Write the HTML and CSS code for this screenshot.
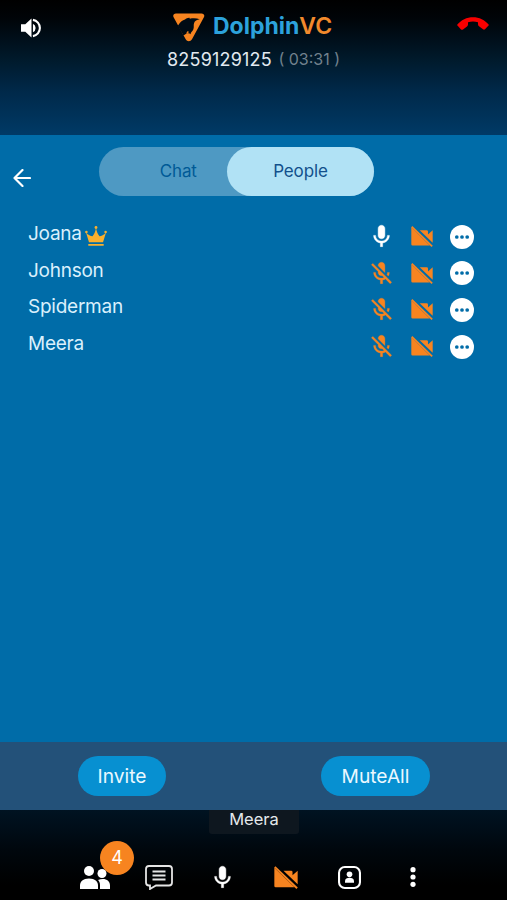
FILE: index.html
```
<!DOCTYPE html>
<html lang="en">
<head>
<meta charset="utf-8">
<title>DolphinVC</title>
<link rel="stylesheet" href="styles.css">
</head>
<body>
<svg width="0" height="0" class="defs" aria-hidden="true">
  <symbol id="mic" viewBox="0 0 24 24"><path d="M12 14c1.660 0 3-1.340 3-3V5c0-1.660-1.340-3-3-3S9 3.340 9 5v6c0 1.660 1.340 3 3 3zm5.300-3c0 3-2.540 5.100-5.300 5.100S6.700 14 6.700 11H5c0 3.410 2.720 6.230 6 6.720V21h2v-3.280c3.280-.480 6-3.300 6-6.720h-1.700z" stroke="currentColor" stroke-width=".4"/></symbol>
  <symbol id="mic-off" viewBox="0 0 24 24"><path d="M19 11h-1.700c0 .740-.160 1.430-.430 2.050l1.230 1.230c.560-.980.900-2.090.900-3.280zm-4.020.170c0-.060.020-.110.020-.170V5c0-1.660-1.340-3-3-3S9 3.340 9 5v.180l5.980 5.990zM4.270 3 3 4.270l6.010 6.010V11c0 1.660 1.330 3 2.990 3 .220 0 .440-.030.650-.080l1.660 1.660c-.710.330-1.500.520-2.310.520-2.760 0-5.300-2.100-5.300-5.100H5c0 3.410 2.720 6.230 6 6.720V21h2v-3.280c.910-.130 1.770-.450 2.540-.900L19.730 21 21 19.730 4.270 3z" stroke="currentColor" stroke-width=".3"/></symbol>
  <symbol id="cam-off" viewBox="0 0 21 20"><path d="M.3 1.500 18 18.600H1.500Q.3 18.600.3 17.400zM8.300 4H15q1.200 0 1.200 1.200V8l4.500-4v12z"/><path d="M.7.700 20.200 19.400" stroke="currentColor" stroke-width="1.700" fill="none"/></symbol>
  <symbol id="more" viewBox="0 0 24 24"><circle cx="12" cy="12" r="12"/><g fill="#006ca8"><circle cx="6.800" cy="12" r="1.850"/><circle cx="12" cy="12" r="1.850"/><circle cx="17.200" cy="12" r="1.850"/></g></symbol>
</svg>
<div class="app">
  <header class="top">
    <svg class="speaker" viewBox="0 0 22 20"><path d="M0 6h4.500L11 0v20l-6.500-6H0z"/><path d="M12.500 5.500a5 5 0 0 1 0 9z"/><path d="M12.500 1.500a8.600 8.600 0 0 1 0 17" fill="none" stroke="currentColor" stroke-width="2.200"/></svg>
    <div class="title">
      <div class="brand">
        <svg class="logo" viewBox="0 0 32 29"><path d="M3 .5h25.500c2.300 0 3.500 1.800 2.400 3.800L19 26.300c-1.500 2.500-5 2.500-6.300 0L.6 4.300C-.4 2.300.7.500 3 .5z"/><path class="fin" d="M5 12.500C7.500 8.500 9.500 7.300 12 6.500c1.300-1.200 3-2 4.500-1.800l.3 1c3.500-.7 7-.6 10 .6-3 .3-5 1.500-5.700 3.700-.8 2 .2 4.200-.8 6.500-.8 2-2.500 2.300-2.800 4.700-1-1.200-2.300-1.300-4-.6L10.500 22.500 4.500 12.500c3-1 6-1 8.500.2 2 1 2.800 3 1.800 5-.6 1.100-1.500 1.900-1.600 3.200l3-2z"/></svg>
        <span class="name">Dolphin<b>VC</b></span>
      </div>
      <div class="call"><span class="number">8259129125</span><span class="time">( 03:31 )</span></div>
    </div>
    <svg class="hangup" viewBox="0 0 32 13"><path d="M0 8C8-2.500 24-2.500 32 8l-4 4.300q-1 .7-2 0l-4-3q-1-.7-1-2V5.200q-5-1.500-10 0v2.200q0 1.200-1 2l-4 3q-1 .7-2 0z"/></svg>
  </header>
  <main class="panel">
    <div class="switch">
      <svg class="back" viewBox="0 0 18 18"><path d="M17 9H1.500M9.500 1l-8 8 8 8"/></svg>
      <div class="tabs"><span class="tab">Chat</span><span class="tab active">People</span></div>
    </div>
    <ul class="people">
      <li><span class="person">Joana</span><svg class="crown" viewBox="0 0 22 20"><path d="M4 16.300 1 6.500q3.500 3.800 6.500 3.800Q10.500 7 11 1q.5 6 3.500 9.300 3 0 6.500-3.800l-3 9.800zM3.300 18h15.400v1.700H3.300z"/><circle cx="11" cy="1.500" r="1.400"/><circle cx="1.400" cy="6" r="1.300"/><circle cx="20.600" cy="6" r="1.300"/></svg><span class="status"><svg class="mic on"><use href="#mic"/></svg><svg class="cam"><use href="#cam-off"/></svg><svg class="more"><use href="#more"/></svg></span></li>
      <li><span class="person">Johnson</span><span class="status"><svg class="mic"><use href="#mic-off"/></svg><svg class="cam"><use href="#cam-off"/></svg><svg class="more"><use href="#more"/></svg></span></li>
      <li><span class="person">Spiderman</span><span class="status"><svg class="mic"><use href="#mic-off"/></svg><svg class="cam"><use href="#cam-off"/></svg><svg class="more"><use href="#more"/></svg></span></li>
      <li><span class="person">Meera</span><span class="status"><svg class="mic"><use href="#mic-off"/></svg><svg class="cam"><use href="#cam-off"/></svg><svg class="more"><use href="#more"/></svg></span></li>
    </ul>
  </main>
  <div class="actions"><button class="invite">Invite</button><button class="mute">MuteAll</button></div>
  <footer class="bottom">
    <div class="speaking">Meera</div>
    <nav class="tools">
      <div class="tool"><svg class="group" viewBox="0 0 30 23"><circle cx="9" cy="5" r="5"/><circle cx="22" cy="7.500" r="4.500"/><path d="M0 23v-3.500c0-4 3-7 9-7s9 3 9 7V23zM20 23v-4c0-2-.7-3.700-2-5 7-2.500 12 .5 12 5.500V23z"/></svg><span class="badge">4</span></div>
      <div class="tool"><svg class="chat" viewBox="0 0 28 25"><path d="M4 1h20q3 0 3 3v13.500q0 3-3 3H11L5 24v-3.500H4q-3 0-3-3V4q0-3 3-3z"/><path d="M7.500 6.500h13M7.500 10.500h13M7.500 14.500h13"/></svg></div>
      <div class="tool"><svg class="mic on"><use href="#mic"/></svg></div>
      <div class="tool"><svg class="cam"><use href="#cam-off"/></svg></div>
      <div class="tool"><svg class="profile" viewBox="0 0 22 22"><rect x="1" y="1" width="20" height="20" rx="5.500" fill="none" stroke="currentColor" stroke-width="2"/><circle cx="11" cy="8" r="2.700"/><path d="M6.700 16v-1.500c0-2.300 2-3.200 4.300-3.200s4.300.9 4.300 3.200V16z"/></svg></div>
      <div class="tool"><svg class="dots" viewBox="0 0 6 20"><circle cx="3" cy="2.700" r="2.600"/><circle cx="3" cy="10" r="2.600"/><circle cx="3" cy="17.300" r="2.600"/></svg></div>
    </nav>
  </footer>
</div>
</body>
</html>
```
FILE: styles.css
```
* { box-sizing: border-box; }
body { margin: 0; font-family: Inter, "Liberation Sans", sans-serif; background: #000; color: #fff; }
svg { display: block; fill: currentColor; flex: none; }
.defs { position: absolute; }
.app { width: 507px; height: 900px; display: flex; flex-direction: column; overflow: hidden; }

.top { height: 135px; flex: none; display: flex; align-items: flex-start; background: linear-gradient(#000 0, #000408 18px, #001a2c 60px, #00294a 92px, #003a66 135px); }
.speaker { width: 21px; height: 20px; margin: 18px 0 0 21px; }
.title { width: 180px; margin: 12px 0 0 122px; }
.brand { display: flex; align-items: flex-start; height: 34px; }
.logo { width: 32px; height: 29px; margin: 1px 0 0 9px; color: #f78420; }
.fin { fill: #000b14; }
.name { margin-left: 8px; font-size: 23px; line-height: 28px; font-weight: 700; color: #2ca2dc; white-space: nowrap; letter-spacing: 0; }
.name b { font-weight: 600; color: #f28a2c; }
.call { display: flex; align-items: center; height: 26px; margin-left: 3px; white-space: nowrap; color: #e3eaf0; }
.number { font-size: 18px; letter-spacing: .2px; }
.time { margin-left: 6.500px; font-size: 16px; color: #71818d; }
.hangup { width: 32px; height: 13px; margin: 17px 0 0 113px; color: #f80000; }

.panel { height: 607px; flex: none; background: #006ca8; }
.switch { display: flex; height: 81px; padding: 12px 0 0 13px; }
.back { width: 18px; height: 18px; margin-top: 22px; fill: none; stroke: #fff; stroke-width: 2.200; stroke-linecap: round; stroke-linejoin: round; }
.tabs { display: flex; width: 275.500px; height: 49px; margin-left: 67.500px; border-radius: 25px; background: #4e99c3; }
.tab { width: 128.500px; padding-left: 31px; text-align: center; font-size: 17px; letter-spacing: -.1px; line-height: 49px; color: #005a96; }
.tab.active { width: 147px; padding: 0; border-radius: 25px; background: #b1e2f5; color: #12508c; }
.people { list-style: none; margin: 0; padding: 0 33px 0 28px; }
.people li { display: flex; align-items: center; height: 36.600px; }
.person { font-size: 19px; letter-spacing: -.25px; line-height: 36px; color: #daf0fc; }
.person + .crown { margin: 4px 0 0 3px; }
.crown { width: 22px; height: 20px; color: #fbb02d; }
.status { display: flex; align-items: center; margin: 5px 0 0 auto; color: #f78420; }
.mic { width: 27px; height: 27px; }
.mic.on { color: #fff; }
.cam { width: 22px; height: 21px; margin-left: 16px; }
.more { width: 24px; height: 24px; margin-left: 17px; color: #fff; }

.actions { height: 68px; flex: none; display: flex; padding: 14px 0 0 78px; background: #235179; }
button { height: 40px; padding: 0; border: 0; border-radius: 20px; background: #0790d1; color: #eaf8ff; font: 19.200px Inter, sans-serif; }
.invite { width: 88px; }
.mute { width: 109px; margin-left: 155px; }

.bottom { height: 90px; background: linear-gradient(#001322, #00070d 40px, #000 75px); }
.speaking { width: 90px; height: 24px; margin-left: 209px; border-radius: 0 0 3px 3px; background: #0e171f; color: #e4e8eb; text-align: center; font-size: 16.500px; line-height: 18px; }
.tools { display: flex; align-items: center; height: 86px; margin-left: 63.700px; }
.tool { position: relative; width: 63.500px; height: 86px; display: flex; align-items: center; justify-content: center; }
.tool .cam { margin: 0; width: 24px; height: 23px; color: #f78420; }
.group { width: 30px; height: 23px; }
.badge { position: absolute; left: 36.300px; top: 7px; width: 34px; height: 34px; border-radius: 50%; background: #f78420; font-size: 18px; line-height: 34px; text-align: center; }
.chat { width: 28px; height: 25px; fill: none; stroke: #e5e5e5; stroke-width: 1.800; }
.profile { width: 23px; height: 23px; }
.dots { width: 6px; height: 20px; }
```
